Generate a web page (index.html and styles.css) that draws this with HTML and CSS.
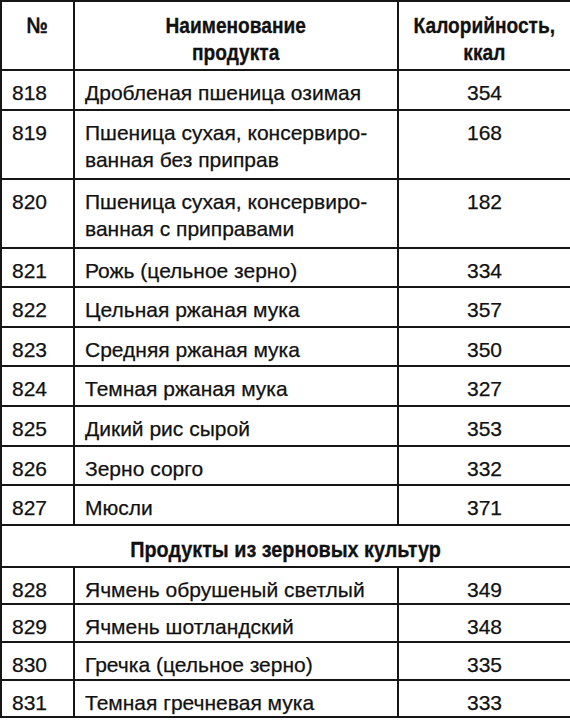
FILE: index.html
```html
<!DOCTYPE html>
<html lang="ru">
<head>
<meta charset="utf-8">
<title>Калорийность продуктов</title>
<link rel="stylesheet" href="styles.css">
</head>
<body>
<table class="kcal-table">
  <colgroup>
    <col class="col-num">
    <col class="col-name">
    <col class="col-kcal">
  </colgroup>
  <thead>
    <tr>
      <th><span class="cond">№</span></th>
      <th><span class="cond">Наименование<br>продукта</span></th>
      <th><span class="cond">Калорийность,<br>ккал</span></th>
    </tr>
  </thead>
  <tbody>
    <tr><td class="num">818</td><td class="name">Дробленая пшеница озимая</td><td class="kcal">354</td></tr>
    <tr class="two-line"><td class="num">819</td><td class="name">Пшеница сухая, консервиро-<br>ванная без приправ</td><td class="kcal">168</td></tr>
    <tr class="two-line"><td class="num">820</td><td class="name">Пшеница сухая, консервиро-<br>ванная с приправами</td><td class="kcal">182</td></tr>
    <tr><td class="num">821</td><td class="name">Рожь (цельное зерно)</td><td class="kcal">334</td></tr>
    <tr><td class="num">822</td><td class="name">Цельная ржаная мука</td><td class="kcal">357</td></tr>
    <tr><td class="num">823</td><td class="name">Средняя ржаная мука</td><td class="kcal">350</td></tr>
    <tr><td class="num">824</td><td class="name">Темная ржаная мука</td><td class="kcal">327</td></tr>
    <tr><td class="num">825</td><td class="name">Дикий рис сырой</td><td class="kcal">353</td></tr>
    <tr><td class="num">826</td><td class="name">Зерно сорго</td><td class="kcal">332</td></tr>
    <tr><td class="num">827</td><td class="name">Мюсли</td><td class="kcal">371</td></tr>
    <tr class="section"><td colspan="3"><span class="cond cond-wide">Продукты из зерновых культур</span></td></tr>
    <tr class="compact"><td class="num">828</td><td class="name">Ячмень обрушеный светлый</td><td class="kcal">349</td></tr>
    <tr class="compact"><td class="num">829</td><td class="name">Ячмень шотландский</td><td class="kcal">348</td></tr>
    <tr class="compact"><td class="num">830</td><td class="name">Гречка (цельное зерно)</td><td class="kcal">335</td></tr>
    <tr class="compact"><td class="num">831</td><td class="name">Темная гречневая мука</td><td class="kcal">333</td></tr>
  </tbody>
</table>
</body>
</html>
```

FILE: styles.css
```css
html, body {
  margin: 0;
  padding: 0;
  background: #ffffff;
}

body {
  font-family: "Liberation Sans", Arial, sans-serif;
  color: #111111;
}

.kcal-table {
  width: 570px;
  border-collapse: collapse;
  table-layout: fixed;
}

.col-num { width: 73px; }
.col-name { width: 324px; }
.col-kcal { width: 173px; }

.kcal-table th,
.kcal-table td {
  border: 2px solid #161616;
  vertical-align: top;
  line-height: 27px;
  white-space: nowrap;
}

.kcal-table th {
  font-weight: bold;
  font-size: 22px;
  text-align: center;
  padding: 10px 0 3px;
}

.cond {
  display: inline-block;
  transform: scaleX(0.87);
  transform-origin: 50% 50%;
  font-weight: bold;
  -webkit-text-stroke: 0.3px #111111;
}

.cond-wide {
  transform: scaleX(0.9);
}

.kcal-table td {
  font-size: 21px;
  padding: 8px 10px 2.6px;
  -webkit-text-stroke: 0.25px #111111;
}

.kcal-table td.name {
  padding-left: 10px;
}

.kcal-table td.kcal {
  text-align: center;
}

.kcal-table tr.two-line td {
  padding-bottom: 5px;
}

.kcal-table tr.compact td {
  padding-bottom: 0.6px;
}

.kcal-table tr.section td {
  font-size: 22px;
  text-align: center;
  padding: 10px 0 3px;
}
```
